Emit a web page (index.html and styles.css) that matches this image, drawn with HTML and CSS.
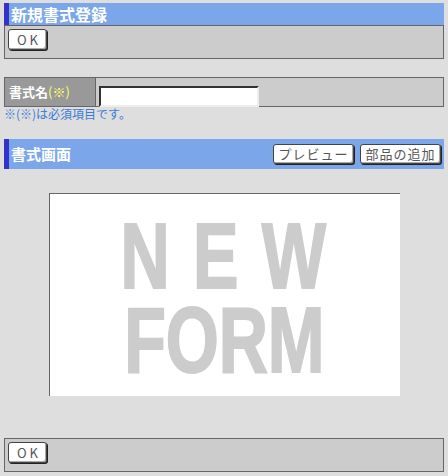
FILE: index.html
```html
<!DOCTYPE html>
<html lang="ja">
<head>
    <meta charset="UTF-8">
    <meta name="viewport" content="width=device-width, initial-scale=1.0">
    <title>新規書式登録</title>
    <link rel="stylesheet" href="styles.css">
</head>
<body>
    <div class="title-bar">新規書式登録</div>
    <div class="button-box">
        <button class="btn btn-ok">OK</button>
    </div>

    <div class="field-row">
        <div class="field-label">書式名<span class="required">(※)</span></div>
        <div class="field-input">
            <input type="text" class="text-input">
        </div>
    </div>
    <p class="note">※(※)は必須項目です。</p>

    <div class="title-bar section-bar">
        <span>書式画面</span>
        <div class="section-buttons">
            <button class="btn btn-wide">プレビュー</button>
            <button class="btn btn-wide">部品の追加</button>
        </div>
    </div>

    <div class="preview-area">
        <div class="preview">
            <div class="preview-text"><span class="spaced">N E W</span><br>FORM</div>
        </div>
    </div>

    <div class="button-box">
        <button class="btn btn-ok">OK</button>
    </div>
</body>
</html>
```

FILE: styles.css
```css
body {
    margin: 0;
    padding: 3px 4px;
    background: #dedede;
    font-family: "Noto Sans CJK JP", sans-serif;
}

.title-bar {
    height: 22px;
    line-height: 22px;
    background: #7ba6e9;
    border-left: 5px solid #3333cc;
    padding-left: 2px;
    color: #fff;
    font-size: 16px;
    font-weight: bold;
}

.button-box {
    background: #cccccc;
    border: 1px solid #666;
    padding: 3px 3px 6px;
    height: 23px;
}

.btn {
    display: block;
    background: #fff;
    border: 1px solid #444;
    border-radius: 3px;
    box-shadow: 1px 1px 0 #222, inset -1px -1px 0 #aaa;
    color: #555;
    font-family: "Noto Sans CJK JP", sans-serif;
    font-size: 12px;
    padding: 0;
    cursor: pointer;
}

.btn-ok {
    width: 39px;
    height: 21px;
    font-size: 13px;
    letter-spacing: 3px;
    text-indent: 3px;
}

.field-row {
    display: flex;
    margin-top: 18px;
    height: 28px;
    border: 1px solid #666;
    background: #cccccc;
}

.field-label {
    width: 86px;
    background: #999999;
    border-right: 1px solid #666;
    padding-left: 4px;
    color: #fff;
    font-size: 13px;
    font-weight: bold;
    line-height: 28px;
}

.required {
    color: #ffff66;
    font-weight: normal;
}

.field-input {
    padding: 4px 3px;
}

.text-input {
    width: 154px;
    height: 15px;
    margin: 0;
    padding: 1px;
    border: 2px solid;
    border-color: #333 #eee #eee #333;
    background: #fff;
}

.note {
    margin: 0;
    color: #3a7bd5;
    font-size: 12px;
    line-height: 14px;
}

.section-bar {
    display: flex;
    justify-content: space-between;
    align-items: center;
    margin-top: 18px;
    height: 30px;
    line-height: 30px;
    font-size: 15px;
}

.section-buttons {
    display: flex;
    gap: 6px;
    padding-right: 3px;
}

.btn-wide {
    width: 81px;
    height: 20px;
    line-height: 18px;
    font-size: 13px;
    letter-spacing: 1px;
}

.preview-area {
    display: flex;
    justify-content: center;
    padding: 24px 0 42px;
}

.preview {
    width: 351px;
    height: 203px;
    background: #fff;
    border-top: 1px solid #666;
    border-left: 1px solid #666;
    display: flex;
    justify-content: center;
    padding-top: 20px;
    box-sizing: border-box;
}

.preview-text {
    font-family: "Liberation Sans", sans-serif;
    font-weight: bold;
    font-size: 92px;
    line-height: 84px;
    color: #cccccc;
    -webkit-text-stroke: 2px #cccccc;
    text-align: center;
    transform: scaleX(0.74);
    white-space: nowrap;
}

.spaced {
    letter-spacing: 3px;
}
```
